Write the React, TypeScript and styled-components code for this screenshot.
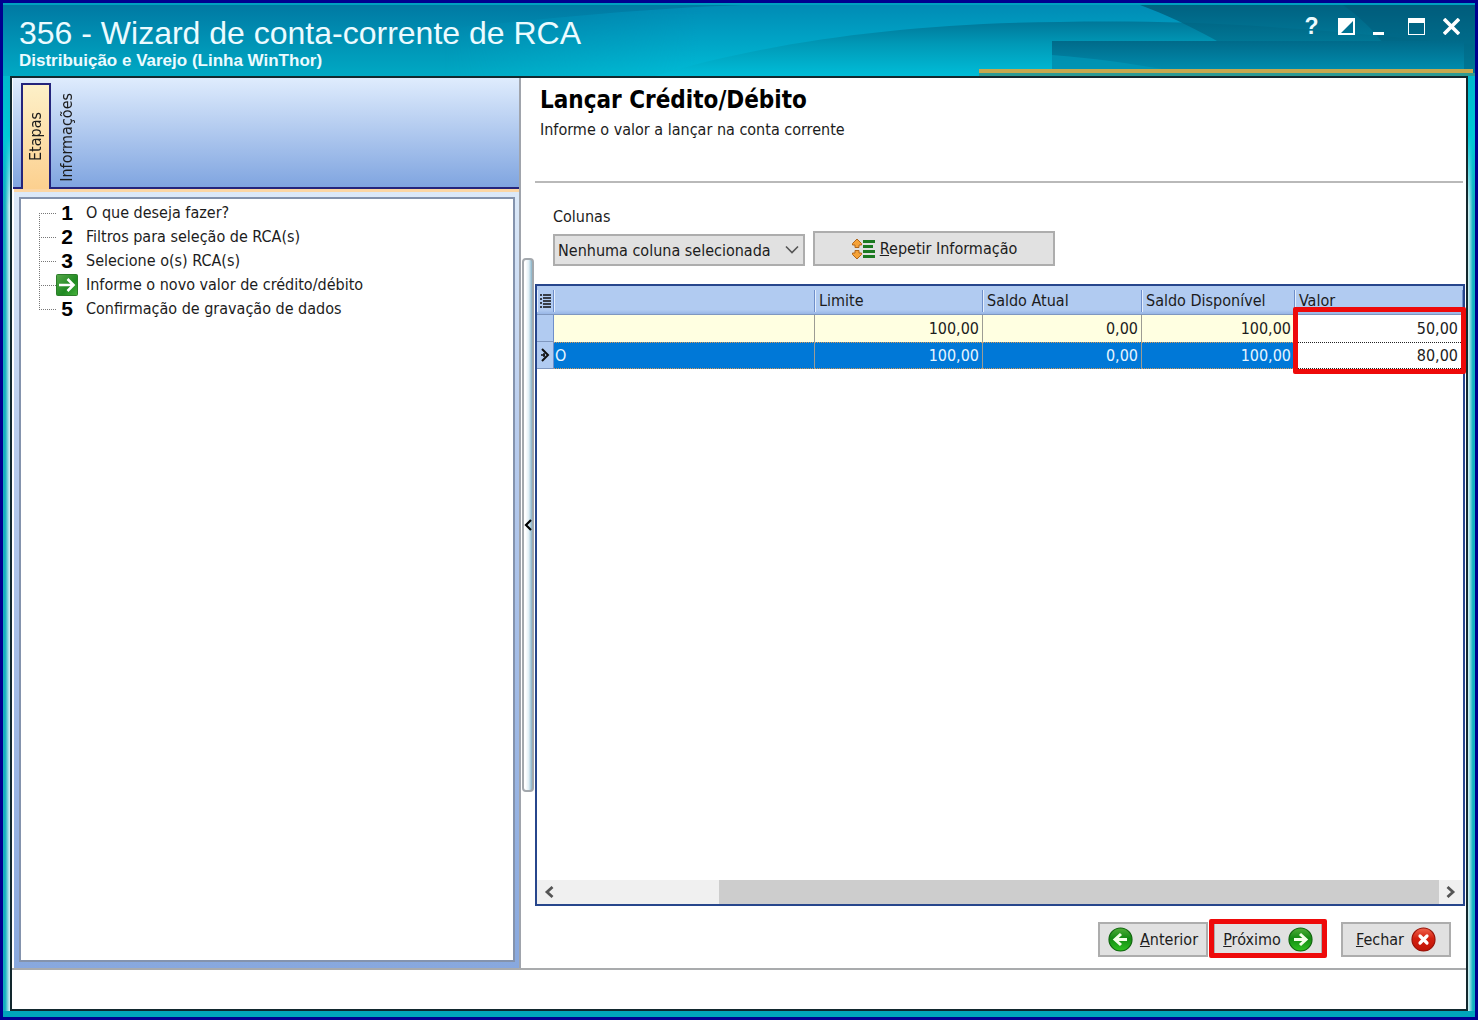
import React from "react";
import styled, { createGlobalStyle } from "styled-components";

const uiFont = `"DejaVu Sans Condensed", "DejaVu Sans", sans-serif`;
const titleFont = `"Liberation Sans", Arial, sans-serif`;

const GlobalStyle = createGlobalStyle`
  *, *::before, *::after { box-sizing: border-box; }
  body { margin: 0; font-family: ${uiFont}; font-stretch: condensed; font-size: 16px; line-height: 20px; color: #1c1c1c; }
  button, select, input { font: inherit; color: inherit; }
`;

const Window = styled.div`
  min-height: 100vh;
  display: flex;
  flex-direction: column;
  border: 3px solid #00008f;
  background: #00a5bb;
`;

const TitleBar = styled.header`
  position: relative;
  height: 73px;
  display: flex;
  justify-content: space-between;
  padding: 10px 12px 0 16px;
  color: #ecfbff;
  font-family: ${titleFont};
  border-top: 2px solid #00a0c0;
`;

const Backdrop = styled.svg`
  position: absolute;
  inset: 0;
  width: 100%;
  height: 100%;
`;

const Titles = styled.div`
  position: relative;
`;

const Title = styled.h1`
  margin: 0;
  font-size: 32px;
  line-height: 36px;
  font-weight: 400;
`;

const Subtitle = styled.p`
  margin: 0;
  font-size: 17px;
  line-height: 20px;
  font-weight: 700;
`;

const WindowControls = styled.div`
  position: relative;
  display: flex;
  align-items: flex-start;
  gap: 12px;
`;

const ControlButton = styled.button`
  width: 23px;
  height: 22px;
  padding: 0;
  border: 0;
  background: none;
  display: grid;
  place-items: center;
  font-family: ${titleFont};
  font-size: 23px;
  line-height: 22px;
  font-weight: 700;
`;

const FrameShade = styled.div`
  flex: 1;
  display: flex;
  flex-direction: column;
  padding: 0 7px 6px;
  background:
    linear-gradient(#00b8cc 0, #00c8d6 60px, transparent 130px) 0 0 / 100% 130px no-repeat,
    linear-gradient(#00a5bb, #00a5bb) 0 100% / 100% 6px no-repeat,
    linear-gradient(90deg, #12b0c0 30%, #c6ecef 90%) 0 0 / 7px 100% no-repeat,
    linear-gradient(270deg, #12b0c0 30%, #c6ecef 90%) 100% 0 / 7px 100% no-repeat;
`;

const Frame = styled.div`
  flex: 1;
  display: flex;
  flex-direction: column;
  border: 2px solid #12282e;
  background: #fff;
`;

const Panels = styled.div`
  flex: 1;
  display: flex;
  border-bottom: 2px solid #a9abad;
`;

const Sidebar = styled.aside`
  width: 509px;
  flex: none;
  display: flex;
  flex-direction: column;
  border-right: 2px solid #a0a4ac;
`;

const TabStrip = styled.div`
  height: 111px;
  display: flex;
  align-items: flex-end;
  gap: 1px;
  margin-left: 1px;
  padding-left: 8px;
  background: linear-gradient(#dfecfd, #80a5e0);
  border-bottom: 2px solid #24247c;
`;

const Tab = styled.button<{ $active?: boolean }>`
  width: 30px;
  height: 106px;
  margin-bottom: -2px;
  padding: 0 0 ${(p) => (p.$active ? 28 : 7)}px;
  border: 2px solid ${(p) => (p.$active ? "#24247c" : "transparent")};
  border-bottom: 0;
  background: ${(p) => (p.$active ? "linear-gradient(#fdf0c8, #fcd08f)" : "none")};
  display: flex;
  align-items: flex-end;
  justify-content: center;
`;

const TabText = styled.span`
  writing-mode: vertical-rl;
  transform: rotate(180deg);
`;

const SidebarBody = styled.div`
  flex: 1;
  display: flex;
  margin-left: 2px;
  padding: 5px 4px 6px 5px;
  border-top: 3px solid #fcd6a4;
  background: linear-gradient(#dce9f8, #b9cdee 30%, #88a8de);
`;

const StepsBox = styled.nav`
  flex: 1;
  border: 2px solid #8493ad;
  background: #fff;
  padding: 2px 0 0 18px;
`;

const StepList = styled.ol`
  margin: 0;
  padding: 0;
  list-style: none;
`;

const Step = styled.li`
  display: grid;
  grid-template-columns: 17px 22px 1fr;
  align-items: center;
  height: 24px;
  white-space: nowrap;
`;

const Branch = styled.span<{ $first: boolean; $last: boolean }>`
  height: 24px;
  background:
    linear-gradient(90deg, #777 50%, transparent 50%) 0 12px / 2px 1px repeat-x,
    linear-gradient(#777 50%, transparent 50%) 0 0 / 1px 2px repeat-y;
  clip-path: inset(${(p) => (p.$first ? 12 : 0)}px 0 ${(p) => (p.$last ? 11 : 0)}px 0);
`;

const StepNumber = styled.span`
  display: grid;
  place-items: center;
  font-family: ${titleFont};
  font-size: 21px;
  line-height: 24px;
  font-weight: 700;
  color: #000;
`;

const StepLink = styled.a`
  padding-left: 8px;
  color: inherit;
  text-decoration: none;
`;

const Splitter = styled.button`
  width: 12px;
  margin: 180px 1px 176px;
  padding: 0;
  border: 2px solid #a3a8ad;
  border-radius: 4px;
  background: linear-gradient(90deg, #fff 20%, #dfeef5 60%, #86b1c6);
  display: grid;
  place-items: center;
`;

const Content = styled.main`
  flex: 1;
  min-width: 0;
  display: flex;
  flex-direction: column;
`;

const PageHead = styled.div`
  height: 105px;
  padding: 8px 5px 0;
  margin-right: 3px;
  border-bottom: 2px solid #b9b9b9;
`;

const Heading = styled.h2`
  margin: 0;
  font-size: 24px;
  line-height: 28px;
  font-weight: 700;
  color: #000;
`;

const Lead = styled.p`
  margin: 6px 0 0;
`;

const Toolbar = styled.form`
  height: 101px;
  padding: 24px 18px 0;
`;

const FieldLabel = styled.label`
  display: block;
`;

const ToolRow = styled.div`
  display: flex;
  align-items: flex-end;
  gap: 8px;
  margin-top: 4px;
`;

const SelectWrap = styled.div`
  position: relative;
  width: 252px;
`;

const Select = styled.select`
  display: block;
  appearance: none;
  width: 100%;
  height: 32px;
  padding: 2px 28px 0 3px;
  border: 2px solid #adadad;
  border-radius: 0;
  background: #e1e1e1;
`;

const Chevron = styled.svg`
  position: absolute;
  right: 6px;
  top: 11px;
  pointer-events: none;
`;

const Button = styled.button<{ $wide?: boolean }>`
  width: ${(p) => (p.$wide ? 242 : 110)}px;
  height: 35px;
  padding: 0;
  border: 2px solid #adadad;
  background: #e1e1e1;
  display: flex;
  align-items: center;
  justify-content: center;
  gap: ${(p) => (p.$wide ? 4 : 7)}px;
`;

const GridBox = styled.section`
  position: relative;
  flex: 1;
  display: flex;
  flex-direction: column;
  margin-right: 1px;
  border: 2px solid #27468c;
`;

const GridSpace = styled.div`
  flex: 1;
`;

const Table = styled.table`
  width: 100%;
  border-collapse: separate;
  border-spacing: 0;
  table-layout: fixed;
`;

const Col = styled.col<{ $w?: number }>`
  width: ${(p) => (p.$w ? `${p.$w}px` : "auto")};
`;

const HeadCell = styled.th`
  height: 29px;
  padding: 2px 0 0 4px;
  text-align: left;
  font-weight: 400;
  white-space: nowrap;
  background:
    linear-gradient(#6f8fca, #6f8fca) 100% 4px / 1px 22px no-repeat,
    linear-gradient(#e4eefc, #e4eefc) 0 4px / 1px 22px no-repeat,
    linear-gradient(#b1cbf1 85%, #98b6e6);
  border-bottom: 1px solid #7f97bf;
`;

const MarkHead = styled(HeadCell)`
  padding: 0;
`;

const Row = styled.tr<{ $selected?: boolean }>`
  color: ${(p) => (p.$selected ? "#e6f5ff" : "inherit")};
  --cell: ${(p) => (p.$selected ? "#0078d7" : "#ffffe1")};
  --dots: ${(p) => (p.$selected ? "#d59a5c" : "transparent")};
`;

const Cell = styled.td`
  height: 27px;
  padding: 0 3px 0 0;
  text-align: right;
  background:
    linear-gradient(90deg, var(--dots) 50%, transparent 50%) 0 0 / 2px 1px repeat-x,
    linear-gradient(90deg, var(--dots) 50%, transparent 50%) 0 100% / 2px 1px repeat-x,
    var(--cell);
  border-right: 1px solid #9c9c94;
`;

const NameCell = styled(Cell)`
  padding: 0 0 0 1px;
  text-align: left;
`;

const MarkCell = styled.td`
  padding: 0;
  background: #b1cbf1;
  border-right: 1px solid #6f8fca;
  border-bottom: 1px solid #7f97bf;
`;

const MarkIcon = styled.svg`
  display: block;
  margin: 0 auto;
`;

const ValueCell = styled.td`
  padding: 0;
  color: #1c1c1c;
`;

const ValueInput = styled.input<{ $focused?: boolean }>`
  display: block;
  width: 100%;
  height: 27px;
  padding: 0 4px;
  border: ${(p) => (p.$focused ? "1px dotted #222" : "1px solid #fff")};
  border-left: 0;
  background: #fff;
  text-align: right;
  outline: 0;
`;

const Highlight = styled.span`
  position: absolute;
  border: 5px solid #ee0a0a;
  border-radius: 2px;
  pointer-events: none;
`;

const GridHighlight = styled(Highlight)`
  top: 21px;
  right: -3px;
  width: 173px;
  height: 67px;
`;

const ButtonHighlight = styled(Highlight)`
  inset: -3px -4px -1px -4px;
`;

const ScrollBar = styled.div`
  height: 24px;
  display: flex;
  background: #f0f0f0;
`;

const ScrollArrow = styled.button`
  width: 24px;
  padding: 0;
  border: 0;
  background: none;
  display: grid;
  place-items: center;
`;

const ScrollTrack = styled.div`
  flex: 1;
  display: flex;
  justify-content: flex-end;
`;

const ScrollThumb = styled.div`
  width: 82%;
  background: #cdcdcd;
`;

const Actions = styled.div`
  height: 62px;
  display: flex;
  align-items: flex-start;
  justify-content: flex-end;
  gap: 5px;
  padding: 16px 15px 0;
`;

const Highlighted = styled.div`
  position: relative;
  margin-right: 13px;
`;

const StatusBar = styled.footer`
  height: 39px;
`;

const steps = [
  "O que deseja fazer?",
  "Filtros para seleção de RCA(s)",
  "Selecione o(s) RCA(s)",
  "Informe o novo valor de crédito/débito",
  "Confirmação de gravação de dados",
];
const currentStep = 3;

const rows = [
  { name: "", limit: "100,00", current: "0,00", available: "100,00", value: "50,00" },
  { name: "O", limit: "100,00", current: "0,00", available: "100,00", value: "80,00" },
];

function TitleBackdrop() {
  return (
    <Backdrop viewBox="0 0 1472 71" preserveAspectRatio="none" aria-hidden="true">
      <defs>
        <linearGradient id="base" x1="0" y1="0" x2="0" y2="1">
          <stop offset="0" stopColor="#0079a3" />
          <stop offset="0.5" stopColor="#0092b4" />
          <stop offset="1" stopColor="#00a9c4" />
        </linearGradient>
        <linearGradient id="glow" x1="0" y1="0" x2="0" y2="1">
          <stop offset="0" stopColor="#008bb5" />
          <stop offset="1" stopColor="#00bcd6" />
        </linearGradient>
        <linearGradient id="glowFade" x1="0" y1="0" x2="1" y2="0">
          <stop offset="0" stopColor="#fff" stopOpacity="0" />
          <stop offset="0.25" stopColor="#fff" />
        </linearGradient>
        <mask id="glowMask">
          <rect x="440" width="1032" height="71" fill="url(#glowFade)" />
        </mask>
        <linearGradient id="swoosh" x1="0" y1="0" x2="0" y2="1">
          <stop offset="0" stopColor="#007799" />
          <stop offset="0.4" stopColor="#0098b6" />
          <stop offset="1" stopColor="#00bdd8" />
        </linearGradient>
        <linearGradient id="dark" x1="0" y1="0" x2="0" y2="1">
          <stop offset="0" stopColor="#005876" />
          <stop offset="1" stopColor="#0088a6" />
        </linearGradient>
        <linearGradient id="plate" x1="0" y1="0" x2="0" y2="1">
          <stop offset="0" stopColor="#006a8a" />
          <stop offset="1" stopColor="#008cad" />
        </linearGradient>
      </defs>
      <rect width="1472" height="71" fill="url(#base)" />
      <path d="M440 24C540 14 630 4 740 0H1472V71H440Z" fill="url(#glow)" mask="url(#glowMask)" />
      <path d="M652 71C760 38 900 18 1057 17C1180 15 1280 20 1472 40V71Z" fill="url(#swoosh)" />
      <path d="M1137 0H1472V71H1270C1230 44 1190 20 1137 0Z" fill="url(#dark)" opacity="0.82" />
      <path d="M1340 0H1472V71H1400C1388 44 1366 18 1340 0Z" fill="#005472" opacity="0.4" />
      <rect x="1049" y="36" width="412" height="29" fill="url(#plate)" />
      <path d="M1049 50C1090 53 1125 58 1165 65H1049Z" fill="#0098b8" opacity="0.7" />
      <rect x="976" y="68" width="496" height="3" fill="#2c9a94" />
      <rect x="976" y="64" width="494" height="4" fill="#c6a84e" />
    </Backdrop>
  );
}

function RoundIcon({ kind }: { kind: "left" | "right" | "close" }) {
  const close = kind === "close";
  const id = `ball-${kind}`;
  return (
    <svg width="25" height="25" viewBox="0 0 25 25" aria-hidden="true">
      <defs>
        <linearGradient id={id} x1="0" y1="0" x2="0" y2="1">
          <stop offset="0" stopColor={close ? "#f0654f" : "#4fae38"} />
          <stop offset="0.45" stopColor={close ? "#d4200f" : "#138a12"} />
          <stop offset="1" stopColor={close ? "#c01408" : "#2fc321"} />
        </linearGradient>
      </defs>
      <circle cx="12.5" cy="12.5" r="11.5" fill={`url(#${id})`} stroke={close ? "#971208" : "#11660f"} strokeWidth="1.2" />
      {close ? (
        <path d="M9 9L16 16M16 9L9 16" stroke="#fff" strokeWidth="3.2" strokeLinecap="round" />
      ) : (
        <path
          d="M6 12.5H18M12 7L18 12.5L12 18"
          transform={kind === "left" ? "rotate(180 12.5 12.5)" : undefined}
          fill="none"
          stroke="#f4ffe9"
          strokeWidth="3"
        />
      )}
    </svg>
  );
}

function CurrentStepIcon() {
  return (
    <svg width="22" height="22" viewBox="0 0 22 22" aria-hidden="true">
      <defs>
        <linearGradient id="now" x1="0" y1="0" x2="1" y2="1">
          <stop offset="0" stopColor="#58a94a" />
          <stop offset="0.6" stopColor="#1f8a22" />
          <stop offset="1" stopColor="#48b53c" />
        </linearGradient>
      </defs>
      <rect x="0.5" y="0.5" width="21" height="21" rx="1" fill="url(#now)" stroke="#2c7d2a" />
      <path d="M3 11H18M11.5 5L17.5 11L11.5 17" fill="none" stroke="#fff" strokeWidth="2.6" />
    </svg>
  );
}

function RepeatIcon() {
  return (
    <svg width="25" height="22" viewBox="0 0 25 22" aria-hidden="true">
      <g fill="#f5a238" stroke="#b0661a" strokeWidth="1">
        <path d="M6 1L10.5 5.500V7H8V9.500H4V7H1.500V5.500Z" />
        <path d="M6 21L10.500 16.500V15H8V12.500H4V15H1.500V16.500Z" />
      </g>
      <path d="M12 3.500H24M12 8.500H22M12 13.500H24M12 18.500H24" stroke="#1c7a22" strokeWidth="3" />
    </svg>
  );
}

export default function App() {
  return (
    <Window>
      <GlobalStyle />
      <TitleBar>
        <TitleBackdrop />
        <Titles>
          <Title>356 - Wizard de conta-corrente de RCA</Title>
          <Subtitle>Distribuição e Varejo (Linha WinThor)</Subtitle>
        </Titles>
        <WindowControls>
          <ControlButton aria-label="Ajuda">?</ControlButton>
          <ControlButton aria-label="Alternar">
            <svg width="17" height="17" viewBox="0 0 17 17">
              <path d="M0 0H17V17H0Z M15 3V15H3Z" fill="#fff" fillRule="evenodd" />
            </svg>
          </ControlButton>
          <ControlButton aria-label="Minimizar">
            <svg width="17" height="17" viewBox="0 0 17 17">
              <path d="M0 14H11V17H0Z" fill="#fff" />
            </svg>
          </ControlButton>
          <ControlButton aria-label="Maximizar">
            <svg width="17" height="17" viewBox="0 0 17 17">
              <path d="M0 0H17V17H0Z M1 5V16H16V5Z" fill="#fff" fillRule="evenodd" />
            </svg>
          </ControlButton>
          <ControlButton aria-label="Fechar janela">
            <svg width="17" height="17" viewBox="0 0 17 17">
              <path d="M1 1L16 16M16 1L1 16" stroke="#fff" strokeWidth="3.6" />
            </svg>
          </ControlButton>
        </WindowControls>
      </TitleBar>
      <FrameShade>
        <Frame>
          <Panels>
            <Sidebar>
              <TabStrip role="tablist">
                <Tab $active role="tab" aria-selected="true">
                  <TabText>Etapas</TabText>
                </Tab>
                <Tab role="tab" aria-selected="false">
                  <TabText>Informações</TabText>
                </Tab>
              </TabStrip>
              <SidebarBody>
                <StepsBox>
                  <StepList>
                    {steps.map((text, i) => (
                      <Step key={text}>
                        <Branch $first={i === 0} $last={i === steps.length - 1} />
                        <StepNumber>{i === currentStep ? <CurrentStepIcon /> : i + 1}</StepNumber>
                        <StepLink href="#">{text}</StepLink>
                      </Step>
                    ))}
                  </StepList>
                </StepsBox>
              </SidebarBody>
            </Sidebar>
            <Splitter aria-label="Recolher painel">
              <svg width="8" height="12" viewBox="0 0 8 12">
                <path d="M7 1L2 6L7 11" fill="none" stroke="#000" strokeWidth="2.2" />
              </svg>
            </Splitter>
            <Content>
              <PageHead>
                <Heading>Lançar Crédito/Débito</Heading>
                <Lead>Informe o valor a lançar na conta corrente</Lead>
              </PageHead>
              <Toolbar onSubmit={(e) => e.preventDefault()}>
                <FieldLabel htmlFor="columns">Colunas</FieldLabel>
                <ToolRow>
                  <SelectWrap>
                    <Select id="columns">
                      <option>Nenhuma coluna selecionada</option>
                    </Select>
                    <Chevron width="14" height="10" viewBox="0 0 14 10">
                      <path d="M1 1.5L7 7.5L13 1.5" fill="none" stroke="#555" strokeWidth="1.6" />
                    </Chevron>
                  </SelectWrap>
                  <Button $wide type="button">
                    <RepeatIcon />
                    <span>
                      <u>R</u>epetir Informação
                    </span>
                  </Button>
                </ToolRow>
              </Toolbar>
              <GridBox>
                <Table>
                  <colgroup>
                    <Col $w={17} />
                    <Col />
                    <Col $w={168} />
                    <Col $w={159} />
                    <Col $w={153} />
                    <Col $w={168} />
                  </colgroup>
                  <thead>
                    <tr>
                      <MarkHead aria-label="Colunas da grade">
                        <MarkIcon width="11" height="15" viewBox="0 0 11 15">
                          <path d="M0 2H2M0 6H2M0 10H2M0 14H2M3 2H11M3 5H11M3 8H11M3 11H11M3 14H11" stroke="#111" strokeWidth="1.5" />
                        </MarkIcon>
                      </MarkHead>
                      <HeadCell aria-label="Nome" />
                      <HeadCell>Limite</HeadCell>
                      <HeadCell>Saldo Atual</HeadCell>
                      <HeadCell>Saldo Disponível</HeadCell>
                      <HeadCell>Valor</HeadCell>
                    </tr>
                  </thead>
                  <tbody>
                    {rows.map((row, i) => (
                      <Row key={row.value} $selected={i === 1}>
                        <MarkCell>
                          {i === 1 && (
                            <MarkIcon width="10" height="14" viewBox="0 0 10 14">
                              <path d="M2 1L8 7L2 13" fill="none" stroke="#111" strokeWidth="2" />
                              <path d="M1 7H5M4 5V9" stroke="#111" strokeWidth="1.5" />
                            </MarkIcon>
                          )}
                        </MarkCell>
                        <NameCell>{row.name}</NameCell>
                        <Cell>{row.limit}</Cell>
                        <Cell>{row.current}</Cell>
                        <Cell>{row.available}</Cell>
                        <ValueCell>
                          <ValueInput aria-label={`Valor ${i + 1}`} $focused={i === 1} defaultValue={row.value} />
                        </ValueCell>
                      </Row>
                    ))}
                  </tbody>
                </Table>
                <GridHighlight />
                <GridSpace />
                <ScrollBar>
                  <ScrollArrow aria-label="Rolar para a esquerda">
                    <svg width="10" height="12" viewBox="0 0 10 12">
                      <path d="M8.5 1L3 6L8.5 11" fill="none" stroke="#555" strokeWidth="2.8" />
                    </svg>
                  </ScrollArrow>
                  <ScrollTrack>
                    <ScrollThumb />
                  </ScrollTrack>
                  <ScrollArrow aria-label="Rolar para a direita">
                    <svg width="10" height="12" viewBox="0 0 10 12">
                      <path d="M1.5 1L7 6L1.5 11" fill="none" stroke="#555" strokeWidth="2.8" />
                    </svg>
                  </ScrollArrow>
                </ScrollBar>
              </GridBox>
              <Actions>
                <Button type="button">
                  <RoundIcon kind="left" />
                  <span>
                    <u>A</u>nterior
                  </span>
                </Button>
                <Highlighted>
                  <Button type="button">
                    <span>
                      <u>P</u>róximo
                    </span>
                    <RoundIcon kind="right" />
                  </Button>
                  <ButtonHighlight />
                </Highlighted>
                <Button type="button">
                  <span>
                    <u>F</u>echar
                  </span>
                  <RoundIcon kind="close" />
                </Button>
              </Actions>
            </Content>
          </Panels>
          <StatusBar />
        </Frame>
      </FrameShade>
    </Window>
  );
}
